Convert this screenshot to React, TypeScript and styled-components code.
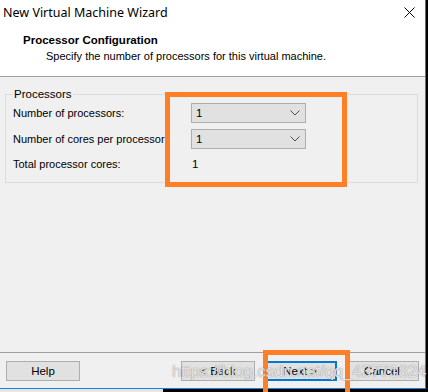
import React from "react";
import styled, { createGlobalStyle } from "styled-components";

const GlobalStyle = createGlobalStyle`
  html, body {
    margin: 0;
    padding: 0;
    background: #000;
  }
  body {
    font-family: "Liberation Sans", Arial, sans-serif;
    font-size: 11px;
    color: #000;
  }
`;

const Screen = styled.div`
  position: relative;
  width: 428px;
  height: 392px;
  overflow: hidden;
  display: flex;
  flex-direction: column;
  background: #000;
`;

const Window = styled.div`
  width: 425px;
  height: 388px;
  display: flex;
  flex-direction: column;
  background: #f0f0f0;
  border-right: 1px solid #1883d7;
  border-bottom: 1px solid #1883d7;
`;

const BottomEdge = styled.div`
  display: flex;
  height: 3px;
  div:first-child {
    width: 163px;
    background: #e6e6e6;
  }
`;

const Header = styled.div`
  background: #fff;
  height: 76px;
  border-bottom: 1px solid #a0a0a0;
  display: flex;
  flex-direction: column;
`;

const TitleBar = styled.div`
  height: 25px;
  display: flex;
  align-items: center;
  justify-content: space-between;
  padding: 0 10px 1px 3px;
`;

const Title = styled.span`
  font-family: "Noto Sans", "Open Sans", sans-serif;
  font-size: 12.5px;
  color: #000;
`;

const PageInfo = styled.div`
  padding: 6px 0 0 23px;
  h1 {
    margin: 0;
    font-size: 11.5px;
    font-weight: bold;
    line-height: 16px;
  }
  p {
    margin: 0;
    padding-left: 23px;
    font-size: 11px;
    line-height: 16px;
  }
`;

const Body = styled.div`
  flex: 1;
  padding: 10px 7px 0 5px;
`;

const Group = styled.fieldset`
  margin: 0;
  height: 96px;
  box-sizing: border-box;
  border: 1px solid #dcdcdc;
  padding: 0 0 0 7px;
  legend {
    padding: 0 1px;
    margin-left: 0;
    font-size: 11.5px;
    line-height: 14px;
  }
`;

const Row = styled.div<{ $height: number }>`
  display: flex;
  align-items: center;
  height: ${(p) => p.$height}px;
`;

const Label = styled.span`
  width: 178px;
  font-size: 11px;
  white-space: nowrap;
`;

const Value = styled.span`
  padding-left: 1px;
  font-size: 11.5px;
`;

const Select = styled.div`
  width: 115px;
  height: 20px;
  box-sizing: border-box;
  border: 1px solid #adadad;
  background: #e1e1e1;
  display: flex;
  align-items: center;
  justify-content: space-between;
  padding: 0 5px 0 4px;
  font-size: 11.5px;
`;

const Footer = styled.div`
  border-top: 1px solid #a0a0a0;
  height: 35px;
  display: flex;
  align-items: center;
  padding: 0 6px 0 6px;
`;

const Button = styled.div<{ $default?: boolean }>`
  width: 74px;
  height: 20px;
  box-sizing: border-box;
  border: ${(p) => (p.$default ? "2px solid #0078d7" : "1px solid #adadad")};
  background: #e1e1e1;
  display: flex;
  align-items: center;
  justify-content: center;
  font-size: 11.5px;
`;

const Spacer = styled.div`
  flex: 1;
`;

const ButtonGroup = styled.div`
  display: flex;
  gap: 8px;
`;

const Highlight = styled.div<{ $x: number; $y: number; $w: number; $h: number }>`
  position: absolute;
  left: ${(p) => p.$x}px;
  top: ${(p) => p.$y}px;
  width: ${(p) => p.$w}px;
  height: ${(p) => p.$h}px;
  box-sizing: border-box;
  border: 5px solid #ff7f27;
  pointer-events: none;
`;

const Watermark = styled.div`
  position: absolute;
  left: 172px;
  top: 362px;
  font-family: "Liberation Sans", Arial, sans-serif;
  font-size: 17px;
  letter-spacing: -0.2px;
  color: rgba(255, 255, 255, 0.8);
  text-shadow: 0 0 1px rgba(90, 90, 90, 0.9);
  white-space: nowrap;
  pointer-events: none;
`;

const Chevron = () => (
  <svg width="10" height="6" viewBox="0 0 10 6">
    <path d="M0.5 0.5 L5 5 L9.5 0.5" fill="none" stroke="#505050" strokeWidth="1" />
  </svg>
);

const CloseIcon = () => (
  <svg width="11" height="11" viewBox="0 0 11 11">
    <path d="M0.5 0.5 L10.5 10.5 M10.5 0.5 L0.5 10.5" stroke="#000" strokeWidth="1" />
  </svg>
);

const App = () => {
  return (
    <Screen>
      <GlobalStyle />
      <Window>
        <Header>
          <TitleBar>
            <Title>New Virtual Machine Wizard</Title>
            <CloseIcon />
          </TitleBar>
          <PageInfo>
            <h1>Processor Configuration</h1>
            <p>Specify the number of processors for this virtual machine.</p>
          </PageInfo>
        </Header>
        <Body>
          <Group>
            <legend>Processors</legend>
            <Row $height={24}>
              <Label>Number of processors:</Label>
              <Select>
                1
                <Chevron />
              </Select>
            </Row>
            <Row $height={27}>
              <Label>Number of cores per processor:</Label>
              <Select>
                1
                <Chevron />
              </Select>
            </Row>
            <Row $height={24}>
              <Label>Total processor cores:</Label>
              <Value>1</Value>
            </Row>
          </Group>
        </Body>
        <Footer>
          <Button>Help</Button>
          <Spacer />
          <ButtonGroup>
            <Button>&lt; Back</Button>
            <Button $default>Next &gt;</Button>
            <Button>Cancel</Button>
          </ButtonGroup>
        </Footer>
      </Window>
      <BottomEdge>
        <div />
      </BottomEdge>
      <Highlight $x={165} $y={92} $w={182} $h={95} />
      <Highlight $x={263} $y={350} $w={87} $h={48} />
      <Watermark>https://blog.csdn.net/qq_43771824</Watermark>
    </Screen>
  );
};

export default App;
